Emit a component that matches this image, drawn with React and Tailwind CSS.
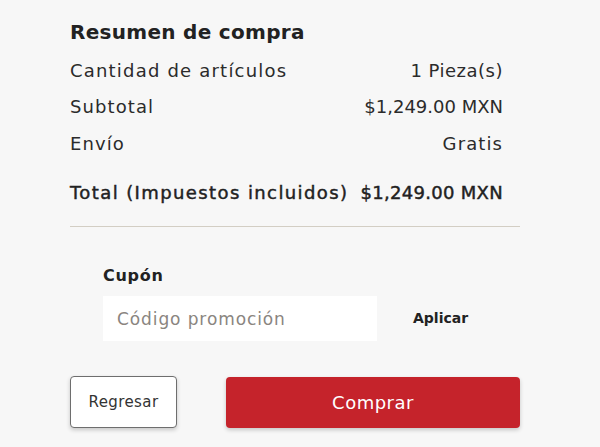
export default function App() {
  return (
    <div className="w-[600px] h-[447px] bg-[#f7f7f7] text-[#2b2b2b] overflow-hidden" style={{ fontFamily: "'DejaVu Sans', Inter, sans-serif" }}>
      <div className="pl-[70px] pr-[80px] pt-[17px]">
        <div className="pr-[17px]">
          <h2 className="text-[20px] font-bold leading-[30px] text-[#222] tracking-[0.3px]">Resumen de compra</h2>
          <div className="mt-[12px] flex justify-between text-[18px] leading-[24px] tracking-[1.2px]">
            <span>Cantidad de artículos</span>
            <span className="tracking-[0.5px]">1 Pieza(s)</span>
          </div>
          <div className="mt-[12px] flex justify-between text-[18px] leading-[24px] tracking-[1.1px]">
            <span>Subtotal</span>
            <span className="tracking-[0px]">$1,249.00 MXN</span>
          </div>
          <div className="mt-[13px] flex justify-between text-[18px] leading-[24px] tracking-[1.1px]">
            <span>Envío</span>
            <span>Gratis</span>
          </div>
          <div className="mt-[25px] flex justify-between text-[18px] leading-[24px] text-[#222] [-webkit-text-stroke:0.45px_#222]">
            <span className="tracking-[1.4px]">Total (Impuestos incluidos)</span>
            <span className="tracking-[0.3px]">$1,249.00 MXN</span>
          </div>
        </div>
        <div className="mt-[21px] h-px bg-[#d3cec4]" />
        <div className="pl-[33px] mt-[37px]">
          <div className="text-[16px] font-bold leading-[24px] text-[#222] tracking-[0.7px]">Cupón</div>
          <div className="mt-[8px] flex items-center">
            <input
              className="w-[274px] h-[45px] bg-white px-[14px] text-[17px] tracking-[0.9px] outline-none placeholder:text-[#8a8580]"
              placeholder="Código promoción"
            />
            <button className="ml-[36px] text-[14px] font-bold text-[#222]">Aplicar</button>
          </div>
        </div>
        <div className="mt-[35px] flex items-center gap-[49px]">
          <button className="w-[107px] h-[52px] rounded-[4px] border-[1.5px] border-[#6e6e6e] bg-white text-[15px] tracking-[0.4px] text-[#333] shadow-[0_2px_4px_rgba(0,0,0,0.2)]">Regresar</button>
          <button className="flex-1 h-[51px] rounded-[4px] bg-[#c5232b] text-white text-[18px] tracking-[0.5px] shadow-[0_2px_4px_rgba(0,0,0,0.2)]">Comprar</button>
        </div>
      </div>
    </div>
  );
}
